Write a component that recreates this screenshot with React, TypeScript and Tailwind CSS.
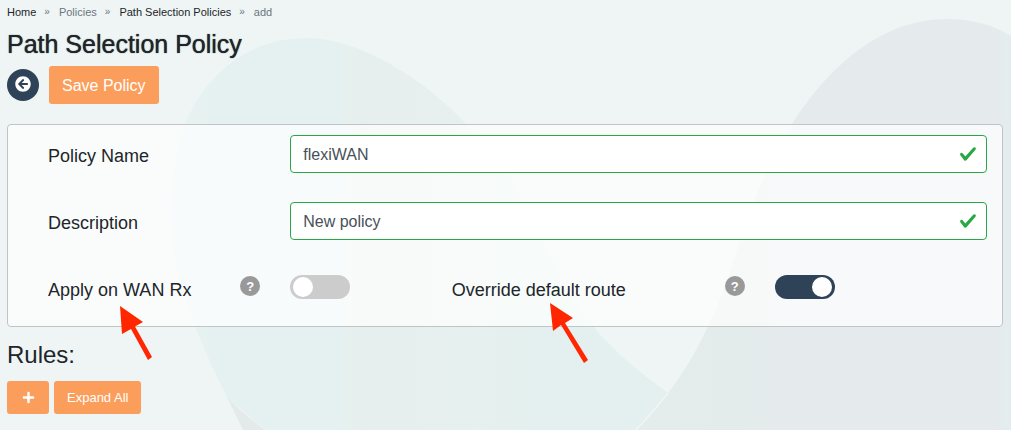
import { useState } from 'react';
import { FaArrowCircleLeft, FaPlus } from 'react-icons/fa';

const crumbs = [
  { label: 'Home', link: true },
  { label: 'Policies', link: false },
  { label: 'Path Selection Policies', link: true },
  { label: 'add', link: false },
];

function Background() {
  return (
    <svg
      className="absolute inset-0 -z-10 h-full w-full"
      viewBox="0 0 1011 430"
      preserveAspectRatio="xMidYMin slice"
      aria-hidden="true"
    >
      <defs>
        <linearGradient id="leaf" gradientUnits="userSpaceOnUse" x1="170" y1="0" x2="670" y2="0">
          <stop offset="0" stopColor="#e8f1f0" />
          <stop offset="0.1" stopColor="#e5f1f1" />
          <stop offset="0.34" stopColor="#e5f1f0" />
          <stop offset="0.38" stopColor="#e7efee" />
          <stop offset="0.62" stopColor="#e6f0ee" />
          <stop offset="0.78" stopColor="#e3f0ef" />
          <stop offset="1" stopColor="#e3f0ef" />
        </linearGradient>
        <linearGradient id="hill" gradientUnits="userSpaceOnUse" x1="636" y1="0" x2="1011" y2="0">
          <stop offset="0" stopColor="#e4edec" />
          <stop offset="0.3" stopColor="#e4ebeb" />
          <stop offset="0.38" stopColor="#e5ebed" />
          <stop offset="0.96" stopColor="#e5ebed" />
          <stop offset="1" stopColor="#e4edee" />
        </linearGradient>
      </defs>
      <path
        d="M307 38C250 38 207 72 185 124C166 178 168 240 180 282C192 322 208 360 227 397L265 430H636L668 393C638 371 614 352 593 326C567 293 556 271 543 240C525 196 500 160 466 124C430 84 362 38 307 38Z"
        fill="url(#leaf)"
      />
      <path d="M227 397L243 430H265Q245 416 227 397Z" fill="#e4e9e9" />
      <path
        d="M947 19C880 19 828 68 792 124C765 168 750 210 737 250C727 280 720 303 708 326C696 352 685 371 668 393Q654 411 636 430H1011V36Q984 19 947 19Z"
        fill="url(#hill)"
      />
      <path d="M668 393Q654 411 636 430" fill="none" stroke="#f0f6f6" strokeWidth="1.5" />
    </svg>
  );
}

function Arrow({ d }: { d: string }) {
  return (
    <svg className="h-16 w-11" viewBox="0 0 44 64" fill="#ff2600" aria-hidden="true">
      <path d={d} />
    </svg>
  );
}

function Help({ text }: { text: string }) {
  return (
    <button
      type="button"
      aria-label={text}
      className="mt-[7px] flex size-5 items-center justify-center rounded-full bg-[#999] text-[13px] leading-none font-bold text-white"
    >
      ?
    </button>
  );
}

function TextField({ id, label, value }: { id: string; label: string; value: string }) {
  const [text, setText] = useState(value);

  return (
    <div className="mb-[29px] grid grid-cols-12">
      <label htmlFor={id} className="col-span-3 px-[15px] pt-2 text-lg/[27px]">
        {label}
      </label>
      <div className="relative col-span-9 px-[15px]">
        <input
          id={id}
          type="text"
          value={text}
          onChange={(e) => setText(e.target.value)}
          className="block h-[38px] w-full rounded border border-[#28a745] bg-white pt-[2px] pr-10 pl-3 text-base text-[#495057] outline-none"
        />
        <svg
          className="pointer-events-none absolute top-[10px] right-[25px] size-[18px]"
          viewBox="0 0 8 8"
          fill="#28a745"
          aria-hidden="true"
        >
          <path d="M2.3 6.73L.6 4.53c-.4-1.04.46-1.4 1.1-.8l1.1 1.4 3.4-3.8c.6-.63 1.6-.27 1.2.7l-4 4.6c-.43.5-.8.4-1.1.1z" />
        </svg>
      </div>
    </div>
  );
}

function Toggle({ id, on }: { id: string; on: boolean }) {
  const [checked, setChecked] = useState(on);

  return (
    <input
      id={id}
      type="checkbox"
      role="switch"
      checked={checked}
      onChange={(e) => setChecked(e.target.checked)}
      className="mt-[6px] block h-6 w-15 cursor-pointer appearance-none rounded-full bg-[#ccc] before:mt-[2px] before:ml-[3px] before:block before:size-5 before:rounded-full before:bg-white checked:bg-[#2f4358] checked:before:ml-[37px]"
    />
  );
}

export default function App() {
  return (
    <div className="relative isolate min-h-screen bg-[#eff5f5] pr-2 pb-4 pl-[7px] font-['Liberation_Sans',Arial,sans-serif] text-[#212529]">
      <Background />

      <nav aria-label="Breadcrumb" className="pt-1">
        <ol className="flex text-[11px]/4">
          {crumbs.map((crumb, i) => (
            <li key={crumb.label} className="flex">
              {i > 0 && <span className="pr-[9px] pl-2 text-[10px]/4 text-[#6c757d]">»</span>}
              {crumb.link ? <a href="#">{crumb.label}</a> : <span className="text-[#6c757d]">{crumb.label}</span>}
            </li>
          ))}
        </ol>
      </nav>

      <h1 className="mt-2 text-[25px]/8 [text-shadow:0_0_1px_currentColor]">Path Selection Policy</h1>

      <div className="mt-[6px] flex items-center gap-[10px]">
        <button
          type="button"
          aria-label="Back"
          className="flex size-8 items-center justify-center rounded-full bg-[#2f4358] pb-[2px] text-base text-white"
        >
          <FaArrowCircleLeft />
        </button>
        <button type="button" className="h-[38px] rounded-[3px] bg-[#fb9e5c] px-[13px] pt-[2px] text-base text-white">
          Save Policy
        </button>
      </div>

      <form className="mt-5 rounded border border-[#bfc5c5] bg-white/70 pt-[10px] pb-[19px] pl-[25px]">
        <TextField id="name" label="Policy Name" value="flexiWAN" />
        <TextField id="description" label="Description" value="New policy" />

        <div className="grid h-[38px] grid-cols-12">
          <div className="relative col-span-3 flex justify-between px-[15px]">
            <label htmlFor="wan-rx" className="pt-2 text-lg/[27px]">
              Apply on WAN Rx
            </label>
            <Help text="Help for Apply on WAN Rx" />
            <div className="pointer-events-none absolute top-9 left-[85px]">
              <Arrow d="M2 1L25 17L17 21.5L34 52L30 55L13 24L4 29Z" />
            </div>
          </div>
          <div className="col-span-2 px-[15px]">
            <Toggle id="wan-rx" on={false} />
          </div>
          <div className="relative col-span-4 flex justify-between px-[15px]">
            <label htmlFor="override" className="pt-2 text-lg/[27px]">
              Override default route
            </label>
            <Help text="Help for Override default route" />
            <div className="pointer-events-none absolute top-[33px] left-[111px]">
              <Arrow d="M2 1L25 16L17 21L40 58L36 61L13 23L5 29Z" />
            </div>
          </div>
          <div className="col-span-3 px-[15px]">
            <Toggle id="override" on />
          </div>
        </div>
      </form>

      <h2 className="mt-3 text-2xl">Rules:</h2>
      <div className="mt-[10px] flex gap-[5px] text-[13px] text-white">
        <button
          type="button"
          aria-label="Add rule"
          className="flex h-[33px] w-[42px] items-center justify-center rounded-[3px] bg-[#fb9e5c]"
        >
          <FaPlus />
        </button>
        <button type="button" className="h-[33px] rounded-[3px] bg-[#fb9e5c] px-[13px]">
          Expand All
        </button>
      </div>
    </div>
  );
}
